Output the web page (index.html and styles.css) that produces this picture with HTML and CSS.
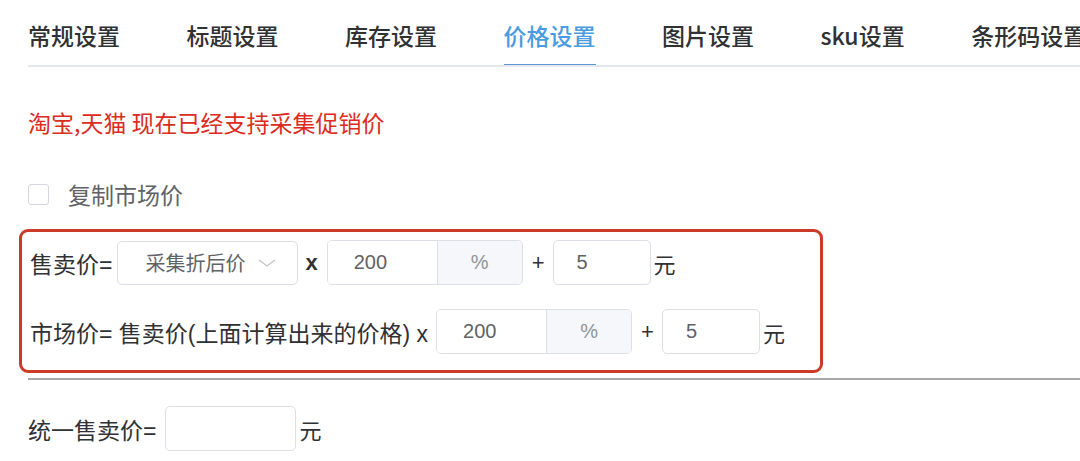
FILE: index.html
```html
<!DOCTYPE html>
<html lang="zh-CN">
<head>
    <meta charset="UTF-8">
    <meta name="viewport" content="width=device-width, initial-scale=1.0">
    <title>价格设置</title>
    <link rel="stylesheet" href="styles.css">
</head>
<body>
    <div class="page">
        <div class="tabs">
            <div class="tab">常规设置</div>
            <div class="tab">标题设置</div>
            <div class="tab">库存设置</div>
            <div class="tab active">价格设置</div>
            <div class="tab">图片设置</div>
            <div class="tab">sku设置</div>
            <div class="tab">条形码设置</div>
        </div>

        <p class="notice">淘宝,天猫 现在已经支持采集促销价</p>

        <label class="checkbox-row">
            <span class="checkbox"></span>
            <span class="checkbox-label">复制市场价</span>
        </label>

        <div class="formula-box">
            <div class="formula-row">
                <span class="label">售卖价=</span>
                <div class="select">
                    <span>采集折后价</span>
                    <svg width="20" height="10" viewBox="0 0 20 10"><path d="M2 2 L10 8 L18 2" fill="none" stroke="#c0c4cc" stroke-width="1.3"/></svg>
                </div>
                <span class="op times">x</span>
                <div class="input-group">
                    <input type="text" value="200">
                    <span class="append">%</span>
                </div>
                <span class="op">+</span>
                <input class="input small" type="text" value="5">
                <span class="unit">元</span>
            </div>
            <div class="formula-row">
                <span class="label">市场价= 售卖价(上面计算出来的价格) x</span>
                <div class="input-group">
                    <input type="text" value="200">
                    <span class="append">%</span>
                </div>
                <span class="op">+</span>
                <input class="input small" type="text" value="5">
                <span class="unit">元</span>
            </div>
        </div>

        <div class="divider"></div>

        <div class="unified-row">
            <span class="label">统一售卖价=</span>
            <input class="input wide" type="text" value="">
            <span class="unit">元</span>
        </div>
    </div>
</body>
</html>
```

FILE: styles.css
```css
body {
    margin: 0;
    font-family: "Liberation Sans", "Noto Sans CJK SC", sans-serif;
    background: #fff;
    color: #303133;
    overflow: hidden;
}

.page {
    padding-left: 28px;
}

.tabs {
    display: flex;
    gap: 66.5px;
    white-space: nowrap;
    overflow: hidden;
    border-bottom: 2px solid #e4e7ed;
}

.tab {
    position: relative;
    flex-shrink: 0;
    padding: 20px 0 15px;
    font-size: 23px;
    line-height: 30px;
    font-weight: 500;
    color: #303133;
    font-family: "Noto Sans CJK SC", sans-serif;
}

.tab.active {
    color: #4a9be0;
}

.tab.active::after {
    content: "";
    position: absolute;
    left: 0;
    right: 0;
    bottom: -2px;
    height: 3px;
    background: #5f96cf;
}

.notice {
    margin: 41px 0 0;
    font-size: 23px;
    line-height: 28px;
    color: #dc2b20;
    font-family: "Noto Sans CJK SC", sans-serif;
}

.checkbox-row {
    display: flex;
    align-items: center;
    margin-top: 45px;
    height: 26px;
}

.checkbox {
    width: 19px;
    height: 19px;
    border: 1px solid #d4d7de;
    border-radius: 3px;
}

.checkbox-label {
    margin-left: 19px;
    font-size: 23px;
    color: #606266;
    font-family: "Noto Sans CJK SC", sans-serif;
}

.formula-box {
    width: 804px;
    margin: 22px 0 0 -9px;
    padding: 8px 0 16px 8px;
    border: 3px solid #cc3b27;
    border-radius: 9px;
    box-sizing: border-box;
}

.formula-row {
    display: flex;
    align-items: center;
    height: 45px;
}

.formula-row + .formula-row {
    margin-top: 24px;
}

.label {
    font-size: 23px;
    color: #303133;
}

.select {
    display: flex;
    align-items: center;
    justify-content: space-between;
    width: 181px;
    height: 44px;
    margin-left: 5px;
    padding: 0 20px 0 27px;
    box-sizing: border-box;
    border: 1px solid #dcdfe6;
    border-radius: 5px;
    font-size: 20px;
    color: #606266;
}

.op {
    font-size: 22px;
    color: #303133;
    margin: 0 8px 0 9px;
}

.op.times {
    margin: 0 9px 0 7px;
    font-weight: bold;
}

.formula-row .label + .input-group {
    margin-left: 8px;
}

.input-group {
    display: flex;
    width: 196px;
    height: 45px;
    border: 1px solid #dcdfe6;
    border-radius: 5px;
    box-sizing: border-box;
    overflow: hidden;
}

.input-group input {
    width: 110px;
    border: none;
    border-right: 1px solid #dcdfe6;
    padding: 0 0 0 26px;
    box-sizing: border-box;
    font: 20px "Liberation Sans", sans-serif;
    color: #606266;
    outline: none;
}

.append {
    flex: 1;
    display: flex;
    align-items: center;
    justify-content: center;
    background: #f5f7fa;
    font-size: 20px;
    color: #909399;
}

.input {
    height: 45px;
    border: 1px solid #dcdfe6;
    border-radius: 5px;
    box-sizing: border-box;
    padding: 0 0 0 23px;
    font: 20px "Liberation Sans", sans-serif;
    color: #606266;
    outline: none;
}

.input.small {
    width: 98px;
}

.unit {
    margin-left: 3px;
    font-size: 22px;
    color: #303133;
    font-family: "Noto Sans CJK SC", sans-serif;
}

.divider {
    height: 2px;
    margin-top: 5px;
    background: #a8a8a8;
}

.unified-row {
    display: flex;
    align-items: center;
    margin-top: 26px;
}

.input.wide {
    width: 131px;
    margin-left: 9px;
}
```
